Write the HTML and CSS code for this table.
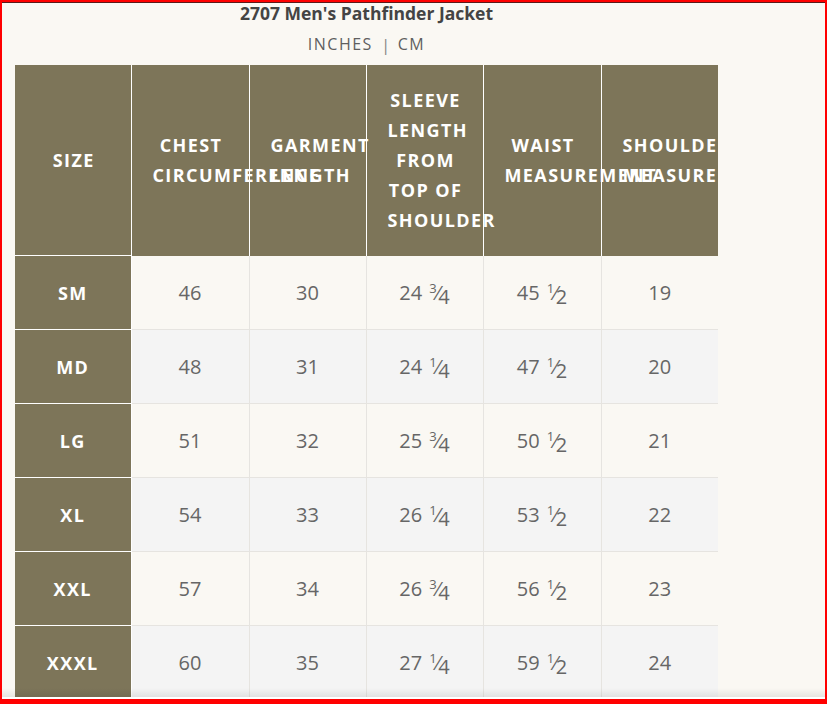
FILE: index.html
```html
<!DOCTYPE html>
<html>
<head>
<meta charset="utf-8">
<link rel="stylesheet" href="styles.css">
</head>
<body>
<div class="frame">
  <div class="page">
    <div class="chart">
      <h1 class="title">2707 Men's Pathfinder Jacket</h1>
      <div class="units"><span class="unit">INCHES</span><span class="sep">|</span><span class="unit">CM</span></div>
      <div class="table-wrap">
        <table class="sizes">
          <colgroup>
            <col class="c-size"><col class="c-wide"><col class="c-norm"><col class="c-norm"><col class="c-wide"><col class="c-norm">
          </colgroup>
          <thead>
            <tr>
              <th>SIZE</th>
              <th>CHEST CIRCUMFERENCE</th>
              <th>GARMENT LENGTH</th>
              <th>SLEEVE LENGTH FROM TOP OF SHOULDER</th>
              <th>WAIST MEASUREMENT</th>
              <th>SHOULDER MEASUREMENT</th>
            </tr>
          </thead>
          <tbody>
            <tr class="odd"><th>SM</th><td>46</td><td>30</td><td>24 <span class="fr"><sup>3</sup>⁄<span class="den">4</span></span></td><td>45 <span class="fr"><sup>1</sup>⁄<span class="den">2</span></span></td><td>19</td></tr>
            <tr class="even"><th>MD</th><td>48</td><td>31</td><td>24 <span class="fr"><sup>1</sup>⁄<span class="den">4</span></span></td><td>47 <span class="fr"><sup>1</sup>⁄<span class="den">2</span></span></td><td>20</td></tr>
            <tr class="odd"><th>LG</th><td>51</td><td>32</td><td>25 <span class="fr"><sup>3</sup>⁄<span class="den">4</span></span></td><td>50 <span class="fr"><sup>1</sup>⁄<span class="den">2</span></span></td><td>21</td></tr>
            <tr class="even"><th>XL</th><td>54</td><td>33</td><td>26 <span class="fr"><sup>1</sup>⁄<span class="den">4</span></span></td><td>53 <span class="fr"><sup>1</sup>⁄<span class="den">2</span></span></td><td>22</td></tr>
            <tr class="odd"><th>XXL</th><td>57</td><td>34</td><td>26 <span class="fr"><sup>3</sup>⁄<span class="den">4</span></span></td><td>56 <span class="fr"><sup>1</sup>⁄<span class="den">2</span></span></td><td>23</td></tr>
            <tr class="even"><th>XXXL</th><td>60</td><td>35</td><td>27 <span class="fr"><sup>1</sup>⁄<span class="den">4</span></span></td><td>59 <span class="fr"><sup>1</sup>⁄<span class="den">2</span></span></td><td>24</td></tr>
          </tbody>
        </table>
      </div>
    </div>
    <div class="shade"></div>
  </div>
</div>
</body>
</html>
```
FILE: styles.css
```css
html, body {
  margin: 0;
  padding: 0;
}
body {
  width: 827px;
  height: 704px;
  overflow: hidden;
  font-family: "Open Sans", "Liberation Sans", sans-serif;
}
.frame {
  box-sizing: border-box;
  width: 827px;
  height: 704px;
  border: 2px solid #ff0000;
  border-bottom-width: 5px;
  background: #ffffff;
}
.page {
  position: relative;
  height: 695px;
  background: #faf8f3;
  border-top: 1px solid #5a1a1a;
  overflow: hidden;
  box-sizing: border-box;
}
.chart {
  width: 703px;
  margin-left: 13px;
}
.title {
  margin: 0;
  padding: 0;
  text-align: center;
  font-size: 17.5px;
  line-height: 20px;
  font-weight: 700;
  color: #444444;
}
.units {
  display: flex;
  justify-content: center;
  align-items: center;
  height: 42px;
  font-size: 16px;
  letter-spacing: 1.5px;
  color: #5f5f5f;
}
.sep {
  margin: 0 6px 0 8px;
  color: #888;
  font-size: 17px;
}
.table-wrap {
  width: 703px;
  overflow: hidden;
}
.sizes {
  width: 703px;
  table-layout: fixed;
  border-collapse: collapse;
}
.c-size { width: 116px; }
.c-wide { width: 118px; }
.c-norm { width: 117px; }
.sizes thead th {
  height: 190px;
  box-sizing: border-box;
  padding: 20px 19px 20px 21px;
  background: #7d7559;
  color: #ffffff;
  font-size: 18px;
  line-height: 30px;
  font-weight: 700;
  letter-spacing: 1.4px;
  text-align: center;
  vertical-align: middle;
  border-left: 1px solid #ffffff;
  white-space: normal;
  overflow: visible;
}
.sizes thead th:first-child {
  border-left: none;
}
.sizes tbody th {
  height: 74px;
  box-sizing: border-box;
  background: #7d7559;
  color: #ffffff;
  font-size: 18px;
  font-weight: 700;
  letter-spacing: 1.4px;
  text-align: center;
  border-top: 1px solid #ffffff;
  padding: 0;
}
.sizes td {
  height: 74px;
  box-sizing: border-box;
  padding: 0;
  text-align: center;
  font-size: 20px;
  color: #666666;
  border-top: 1px solid #e6e4e0;
  border-left: 1px solid #e6e4e0;
}
.sizes tbody tr:first-child td {
  border-top: 1px solid #7d7559;
}
.sizes tbody tr td:nth-child(2) {
  border-left: 1px solid #ffffff;
}
.odd td {
  background: #faf8f3;
}
.even td {
  background: #f4f4f4;
}
.fr {
  display: inline-block;
  margin-left: 2px;
}
.fr sup {
  font-size: 13px;
  vertical-align: 7px;
  line-height: 0;
}
.den {
  display: inline-block;
  transform: translateY(4px);
  margin-left: -1px;
}
.shade {
  position: absolute;
  left: 0;
  right: 0;
  bottom: 0;
  height: 9px;
  background: linear-gradient(to bottom, rgba(0,0,0,0), rgba(0,0,0,0.08));
}
```
